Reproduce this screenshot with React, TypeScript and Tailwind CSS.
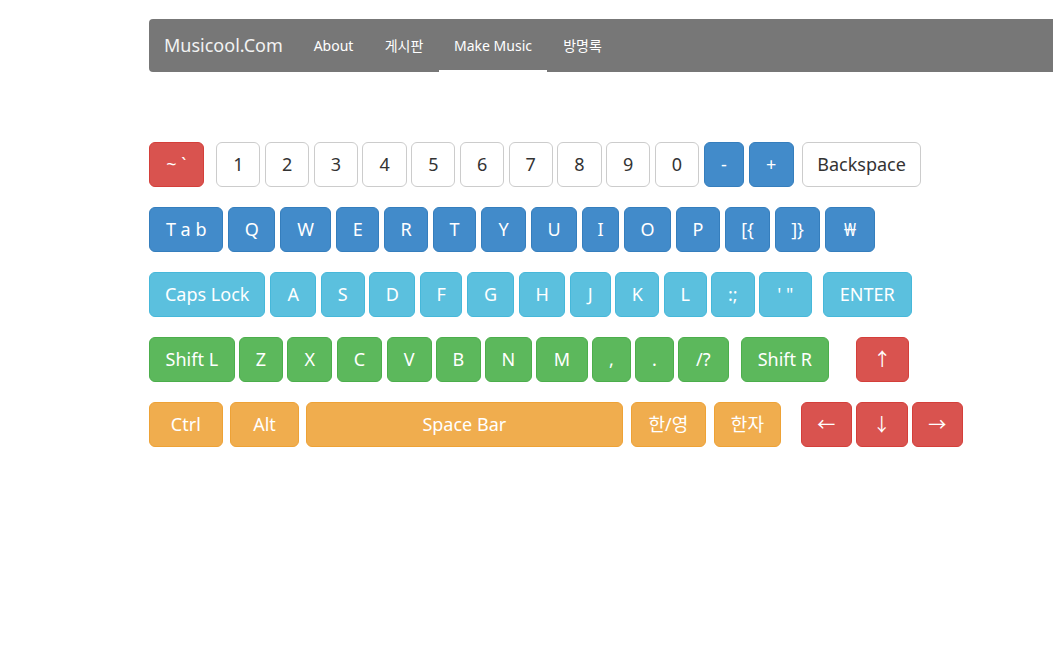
import React from 'react';

type Tone = 'default' | 'primary' | 'info' | 'success' | 'warning' | 'danger';

const tones: Record<Tone, string> = {
  default: 'bg-white border-[#ccc] text-[#333]',
  primary: 'bg-[#428bca] border-[#357ebd] text-white',
  info: 'bg-[#5bc0de] border-[#46b8da] text-white',
  success: 'bg-[#5cb85c] border-[#4cae4c] text-white',
  warning: 'bg-[#f0ad4e] border-[#eea236] text-white',
  danger: 'bg-[#d9534f] border-[#d43f3a] text-white',
};

// [label, tone, width class, margin-left class]
type KeyDef = [string, Tone, string, string];

const rows: KeyDef[][] = [
  [
    ['~ `', 'danger', 'w-[54.7px]', 'ml-0'],
    ['1', 'default', 'w-[44.15px]', 'ml-[12.6px]'],
    ['2', 'default', 'w-[44.15px]', 'ml-[4.6px]'],
    ['3', 'default', 'w-[44.15px]', 'ml-[4.6px]'],
    ['4', 'default', 'w-[44.15px]', 'ml-[4.6px]'],
    ['5', 'default', 'w-[44.15px]', 'ml-[4.6px]'],
    ['6', 'default', 'w-[44.15px]', 'ml-[4.6px]'],
    ['7', 'default', 'w-[44.15px]', 'ml-[4.6px]'],
    ['8', 'default', 'w-[44.15px]', 'ml-[4.6px]'],
    ['9', 'default', 'w-[44.15px]', 'ml-[4.6px]'],
    ['0', 'default', 'w-[44.15px]', 'ml-[4.6px]'],
    ['-', 'primary', 'w-[40.7px]', 'ml-[4.6px]'],
    ['+', 'primary', 'w-[44.7px]', 'ml-[4.6px]'],
    ['Backspace', 'default', 'w-[119px]', 'ml-[8.5px]'],
  ],
  [
    ['T a b', 'primary', 'w-[74.4px]', 'ml-0'],
    ['Q', 'primary', 'w-[47.4px]', 'ml-[4.6px]'],
    ['W', 'primary', 'w-[51.4px]', 'ml-[4.6px]'],
    ['E', 'primary', 'w-[43.4px]', 'ml-[4.6px]'],
    ['R', 'primary', 'w-[44.4px]', 'ml-[4.6px]'],
    ['T', 'primary', 'w-[43.4px]', 'ml-[4.6px]'],
    ['Y', 'primary', 'w-[45.4px]', 'ml-[4.6px]'],
    ['U', 'primary', 'w-[46.4px]', 'ml-[4.6px]'],
    ['I', 'primary', 'w-[37.4px]', 'ml-[4.6px]'],
    ['O', 'primary', 'w-[47.4px]', 'ml-[4.6px]'],
    ['P', 'primary', 'w-[44.4px]', 'ml-[4.6px]'],
    ['[{', 'primary', 'w-[45.4px]', 'ml-[4.6px]'],
    [']}', 'primary', 'w-[45.4px]', 'ml-[4.6px]'],
    ['₩', 'primary', 'w-[50.3px]', 'ml-[4.6px]'],
  ],
  [
    ['Caps Lock', 'info', 'w-[116.4px]', 'ml-0'],
    ['A', 'info', 'w-[46.4px]', 'ml-[4.6px]'],
    ['S', 'info', 'w-[43.7px]', 'ml-[4.6px]'],
    ['D', 'info', 'w-[46.1px]', 'ml-[4.6px]'],
    ['F', 'info', 'w-[42.4px]', 'ml-[4.6px]'],
    ['G', 'info', 'w-[47.4px]', 'ml-[4.6px]'],
    ['H', 'info', 'w-[46.4px]', 'ml-[4.6px]'],
    ['J', 'info', 'w-[40.7px]', 'ml-[4.6px]'],
    ['K', 'info', 'w-[44.1px]', 'ml-[4.6px]'],
    ['L', 'info', 'w-[42.7px]', 'ml-[4.6px]'],
    [':;', 'info', 'w-[43.4px]', 'ml-[4.6px]'],
    ['\' "', 'info', 'w-[52.4px]', 'ml-[4.6px]'],
    ['ENTER', 'info', 'w-[88.4px]', 'ml-[11.6px]'],
  ],
  [
    ['Shift L', 'success', 'w-[85.7px]', 'ml-0'],
    ['Z', 'success', 'w-[43.4px]', 'ml-[4.6px]'],
    ['X', 'success', 'w-[44.8px]', 'ml-[4.6px]'],
    ['C', 'success', 'w-[45.4px]', 'ml-[4.6px]'],
    ['V', 'success', 'w-[45px]', 'ml-[4.6px]'],
    ['B', 'success', 'w-[44.4px]', 'ml-[4.6px]'],
    ['N', 'success', 'w-[46.4px]', 'ml-[4.6px]'],
    ['M', 'success', 'w-[51.4px]', 'ml-[4.6px]'],
    [',', 'success', 'w-[38.4px]', 'ml-[4.6px]'],
    ['.', 'success', 'w-[38.4px]', 'ml-[4.6px]'],
    ['/?', 'success', 'w-[50.4px]', 'ml-[4.6px]'],
    ['Shift R', 'success', 'w-[87.4px]', 'ml-[12.6px]'],
    ['↑', 'danger', 'w-[52.7px]', 'ml-[27.3px]'],
  ],
  [
    ['Ctrl', 'warning', 'w-[73.7px]', 'ml-0'],
    ['Alt', 'warning', 'w-[68.4px]', 'ml-[7.6px]'],
    ['Space Bar', 'warning', 'w-[316.7px]', 'ml-[7.3px]'],
    ['한/영', 'warning', 'w-[74.7px]', 'ml-[8.3px]'],
    ['한자', 'warning', 'w-[66.4px]', 'ml-[8.6px]'],
    ['←', 'danger', 'w-[50.7px]', 'ml-[20.3px]'],
    ['↓', 'danger', 'w-[51.7px]', 'ml-[4.3px]'],
    ['→', 'danger', 'w-[50.7px]', 'ml-[4.3px]'],
  ],
];

function Key({ k }: { k: KeyDef }) {
  const [label, tone, w, ml] = k;
  return (
    <button
      className={`${w} ${ml} ${tones[tone]} flex-none h-[44.7px] border rounded-[6px] flex items-center justify-center whitespace-nowrap text-[18px] leading-none`}
    >
      {label}
    </button>
  );
}

export default function App() {
  return (
    <div
      className="min-h-screen bg-white overflow-hidden"
      style={{ fontFamily: '"Noto Sans", "Noto Sans CJK KR", sans-serif' }}
    >
      <div className="ml-[149px] pt-[19px] w-[1000px]">
        {/* Navbar */}
        <nav className="h-[52.7px] bg-[#777] rounded-l-[4px] flex items-stretch text-white">
          <div className="w-[149px] pl-[15px] flex items-center text-[18px] text-[#f2f2f2]">
            Musicool.Com
          </div>
          <a className="w-[71px] flex items-center justify-center text-[14px]">About</a>
          <a className="w-[70px] flex items-center justify-center text-[14px]">게시판</a>
          <a className="w-[108px] flex items-center justify-center text-[14px] border-b-2 border-white pt-[2px]">
            Make Music
          </a>
          <a className="w-[71px] flex items-center justify-center text-[14px]">방명록</a>
        </nav>

        {/* Keyboard */}
        <div className="mt-[70.3px] flex flex-col gap-[20.3px]">
          {rows.map((row, i) => (
            <div key={i} className="flex items-start">
              {row.map((k) => (
                <Key key={k[0]} k={k} />
              ))}
            </div>
          ))}
        </div>
      </div>
    </div>
  );
}
